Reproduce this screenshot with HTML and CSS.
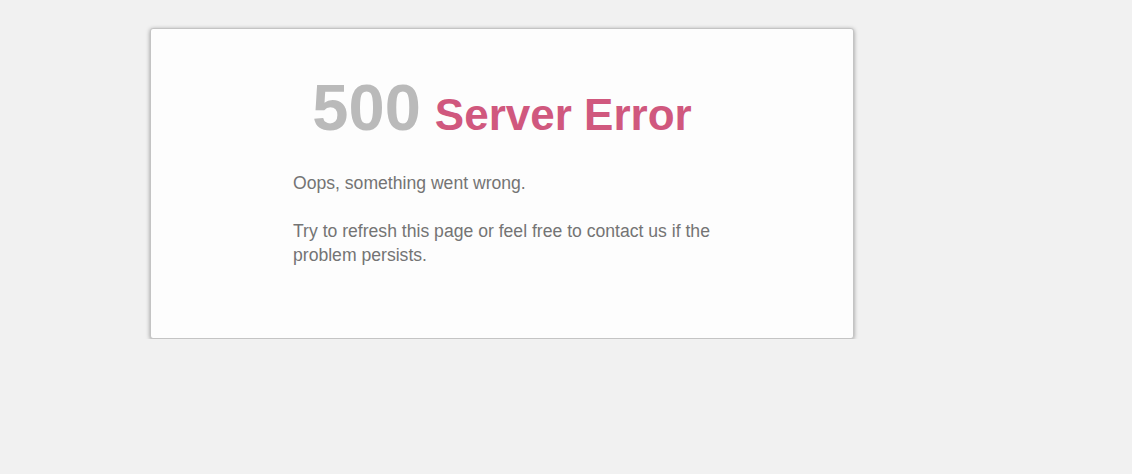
FILE: index.html
```html
<!DOCTYPE html>
<html>
<head>
<meta charset="utf-8">
<link rel="stylesheet" href="styles.css">
</head>
<body>
<div class="page">
  <div class="card">
    <h1 class="title"><span class="code">500</span><span class="label">Server Error</span></h1>
    <div class="body">
      <p>Oops, something went wrong.</p>
      <p>Try to refresh this page or feel free to contact us if the problem persists.</p>
    </div>
  </div>
</div>
</body>
</html>
```

FILE: styles.css
```css
html, body {
  margin: 0;
  padding: 0;
  background: #f1f1f1;
  font-family: "Liberation Sans", Arial, sans-serif;
}
.page {
  padding: 28px 0 0 150px;
}
.card {
  width: 702px;
  height: 309px;
  background: #fdfdfd;
  border: 1px solid #c4c4c4;
  border-radius: 3px;
  box-shadow: 0 1px 4px rgba(0,0,0,0.38);
}
.title {
  margin: 46px 0 0;
  text-align: center;
  font-weight: bold;
  font-size: 44px;
  line-height: 1;
  white-space: nowrap;
}
.code {
  color: #bababa;
  font-size: 65px;
  margin-right: 14px;
}
.label {
  color: #d0587e;
  font-size: 44px;
}
.body {
  width: 418px;
  margin: 31px auto 0;
  color: #747474;
  font-size: 17.6px;
  line-height: 24px;
}
.body p {
  margin: 0 0 24px;
}
```
